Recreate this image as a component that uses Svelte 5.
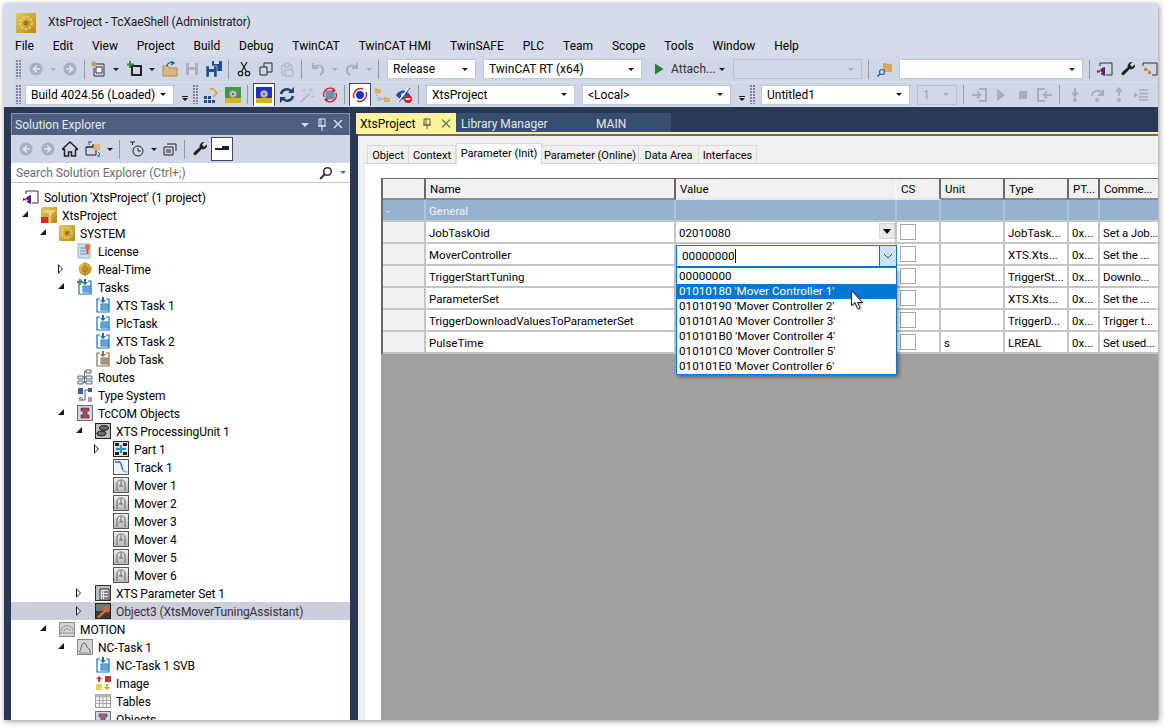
<script>
  const tb1 = [
    'grip', 2, 'd:back', 'dd-off', 'd:fwd', 'sep', 'new', 'dd', 2, 'add', 'dd', 1, 'open', 'd:save', 'saveall', 'sep', 1,
    'cut', 'copy', -1, 'd:paste', 'sep', 2, 'd:undo', 'dd-off', 'd:redo', 'dd-off', 'sep', 5,
    { c: 'Release', w: 89 }, 7, { c: 'TwinCAT RT (x64)', w: 159 }, 6, 'play',
    { t: 'Attach...', w: 46 }, 'dd', 5, { c: '', w: 129, off: true }, 3, 'sep', 2, 'find', 3,
    { c: '', w: 184 }, 3, 'sep', 1, 'sol', 1, 'wrench', 'sol2'
  ]
  const tb2 = [
    'grip', 2, { c: 'Build 4024.56 (Loaded)', w: 149 }, 5, 'over', 'grip', 'bars', 'chip', 'sep', 2, 'on:chipblue', 1, 'sync', -2, 'wand', 1, 'redc', 'sep', 1,
    'on:scan', 'nodes', 'noeye', 'sep', 4,
    { c: 'XtsProject', w: 149 }, 7, { c: '<Local>', w: 149 }, 5, 'over', 'grip', 4,
    { c: 'Untitled1', w: 149 }, 7, { c: '1', w: 40, off: true }, 3, 'sep', 1,
    'd:enter', 'd:run', 'd:stop', 'd:exit', 'sep', 1, 'd:stepin', 'd:stepover', 'd:stepout', 'd:next'
  ]
  const tbSe = [
    4, 'd:back', 'd:fwd', 'home', 1, 'syncview', 'dd', 'sep', 3, 'history', 'dd', -1, 'pages', 'sep', 1, 'wrench', 'on:bar'
  ]

  const tree = [
    [0, '', 'sol', "Solution 'XtsProject' (1 project)"],
    [1, 'o', 'proj', 'XtsProject'],
    [2, 'o', 'system', 'SYSTEM'],
    [3, '', 'license', 'License'],
    [3, 'c', 'rt', 'Real-Time'],
    [3, 'o', 'tasks', 'Tasks'],
    [4, '', 'task', 'XTS Task 1'],
    [4, '', 'task', 'PlcTask'],
    [4, '', 'task', 'XTS Task 2'],
    [4, '', 'jobtask', 'Job Task'],
    [3, '', 'routes', 'Routes'],
    [3, '', 'types', 'Type System'],
    [3, 'o', 'tcom', 'TcCOM Objects'],
    [4, 'o', 'pu', 'XTS ProcessingUnit 1'],
    [5, 'c', 'part', 'Part 1'],
    [5, '', 'track', 'Track 1'],
    [5, '', 'mover', 'Mover 1'],
    [5, '', 'mover', 'Mover 2'],
    [5, '', 'mover', 'Mover 3'],
    [5, '', 'mover', 'Mover 4'],
    [5, '', 'mover', 'Mover 5'],
    [5, '', 'mover', 'Mover 6'],
    [4, 'c', 'params', 'XTS Parameter Set 1'],
    [4, 'c', 'tuning', 'Object3 (XtsMoverTuningAssistant)', true],
    [2, 'o', 'motion', 'MOTION'],
    [3, 'o', 'nctask', 'NC-Task 1'],
    [4, '', 'task', 'NC-Task 1 SVB'],
    [4, '', 'image', 'Image'],
    [4, '', 'tables', 'Tables'],
    [4, '', 'objects', 'Objects']
  ]

  const docTabs = [
    ['Object', 42], ['Context', 47], ['Parameter (Init)', 86], ['Parameter (Online)', 97], ['Data Area', 60], ['Interfaces', 58]
  ]
  const heads = ['', 'Name', 'Value', 'CS', 'Unit', 'Type', 'PT...', 'Comme...']
  const rows = [
    ['JobTaskOid', '02010080', '', 'JobTask...', '0x...', 'Set a Job...'],
    ['MoverController', '', '', 'XTS.Xts...', '0x...', 'Set the ...'],
    ['TriggerStartTuning', '', '', 'TriggerSt...', '0x...', 'Downlo...'],
    ['ParameterSet', '', '', 'XTS.Xts...', '0x...', 'Set the ...'],
    ['TriggerDownloadValuesToParameterSet', '', '', 'TriggerD...', '0x...', 'Trigger t...'],
    ['PulseTime', '', 's', 'LREAL', '0x...', 'Set used...']
  ]
  const options = [
    '00000000',
    "01010180 'Mover Controller 1'",
    "01010190 'Mover Controller 2'",
    "010101A0 'Mover Controller 3'",
    "010101B0 'Mover Controller 4'",
    "010101C0 'Mover Controller 5'",
    "010101E0 'Mover Controller 6'"
  ]
</script>

{#snippet ic(n)}
  <svg class="i" viewBox="0 0 16 16" width="16" height="16">
    {#if n === 'back' || n === 'fwd'}
      <circle cx="8" cy="8" r="6.5" fill="#a9b0bd" />
      <path d={n === 'back' ? 'M9 4.5 5.5 8 9 11.5M6 8h6' : 'M7 4.5 10.5 8 7 11.5M10 8H4'} fill="none" stroke="#e4e7ef" stroke-width="1.6" />
    {:else if n === 'new'}
      <path d="M5 3h8v12H3V7" fill="none" stroke="#333" />
      <path d="M5 6h6v6H5z" fill="#fff" stroke="#333" />
      <path d="M3 0v6M0 3h6M1 1l4 4M5 1 1 5" stroke="#c98a2c" />
    {:else if n === 'add'}
      <path d="M5 5h9v9H5z" fill="none" stroke="#222" stroke-width="2" />
      <path d="M3 0v7M0 3.500h7" stroke="#2f8f3a" stroke-width="2" />
    {:else if n === 'open'}
      <path d="M1 5h5l1 2h8v8H1z" fill="#dcb67a" stroke="#b88a45" />
      <path d="M5 5c0-3 3-4 6-3M9 0l3 2-3 2" fill="none" stroke="#1d5fa8" stroke-width="1.300" />
    {:else if n === 'save'}
      <path d="M2 2h12v12H2z" fill="#a9b0bd" /><path d="M5 2h6v4H5zM5 9h6v5H5z" fill="#d6dbe9" />
    {:else if n === 'saveall'}
      <path d="M6 0h10v10H6z" fill="#1c4f8f" /><path d="M8 0h5v3H8z" fill="#d6dbe9" />
      <path d="M0 5h11v11H0z" fill="#1c4f8f" stroke="#cfd6e5" stroke-width=".6" /><path d="M3 5h5v3H3zM3 11h5v5H3z" fill="#d6dbe9" />
    {:else if n === 'cut'}
      <circle cx="4.500" cy="12.500" r="2.200" fill="none" stroke="#222" stroke-width="1.300" />
      <circle cx="11.500" cy="12.500" r="2.200" fill="none" stroke="#222" stroke-width="1.300" />
      <path d="M5.500 10.500 11 1M10.500 10.500 5 1" stroke="#222" stroke-width="1.300" />
    {:else if n === 'copy'}
      <path d="M6 2h8v9H6z" fill="none" stroke="#222" /><path d="M2 6h7v8H2z" fill="#cfd6e5" stroke="#222" />
    {:else if n === 'paste'}
      <path d="M3 4h10v10H3z" fill="none" stroke="#a9b0bd" /><path d="M6 2h4v4H6z" fill="#cfd6e5" stroke="#a9b0bd" />
      <path d="M6 9h8v6H6z" fill="#cfd6e5" stroke="#a9b0bd" />
    {:else if n === 'undo' || n === 'redo'}
      <path d={n === 'undo' ? 'M3 2v5h5M3 7c3-4 10-3 10 2 0 2-1 4-3 5' : 'M13 2v5H8M13 7C10 3 3 4 3 9c0 2 1 4 3 5'} fill="none" stroke="#a9b0bd" stroke-width="2" />
    {:else if n === 'play'}
      <path d="M4 2.500 12.500 8 4 13.500z" fill="#2d7d3a" />
    {:else if n === 'find'}
      <path d="M6 2h3l1 1h5v8H6z" fill="#dba45c" />
      <circle cx="5" cy="11" r="2.500" fill="#cfd6e5" stroke="#1d5fa8" stroke-width="1.200" /><path d="M3 13 .5 15.500" stroke="#1d5fa8" stroke-width="1.500" />
    {:else if n === 'sol'}
      <path d="M3 5V2h12v12H9" fill="none" stroke="#333" />
      <path d="M0 9l2 1 3-3 3-1v9l-3-1-3-3-2 1z" fill="#68217a" /><path d="M3 10l2 1.500L3 13z" fill="#fff" />
    {:else if n === 'sol2'}
      <path d="M1 5V2h14v12H10" fill="none" stroke="#333" /><path d="M2 7h3v3H2zM6 10h3v3H6z" fill="#c98a2c" /><path d="M5 8l3 3" stroke="#c98a2c" />
    {:else if n === 'wrench'}
      <path d="M15 4.500c0 3-3 4.500-5.200 3.600L4 14c-1 1-3.500-1-2.300-2.200L7.800 6C7 3.500 9.500.5 12.500 1L10 3.500 12 6l2.600-2.600c.2.300.4.700.4 1.100z" fill="#222" />
    {:else if n === 'bars'}
      <path d="M1 9h3v3H1zM5 9h3v3H5zM1 13h3v3H1zM5 13h3v3H5zM9 13h3v3H9z" fill="#1c4f8f" />
      <path d="M7 2h3l4 4-4 4" fill="none" stroke="#d9a01c" stroke-width="1.600" />
    {:else if n === 'chip' || n === 'chipblue'}
      <rect x="0" y="0" width="16" height="16" fill={n === 'chip' ? '#3d9a45' : '#1a2fd0'} />
      <rect x="0" y="11" width="16" height="5" fill="#d8b21a" />
      <circle cx="8" cy="7" r="3.500" fill="#c9c9c9" stroke="#888" stroke-width="1.600" stroke-dasharray="1.500 1" /><circle cx="8" cy="7" r="1.200" fill="#666" />
    {:else if n === 'sync'}
      <path d="M2 7c1-5 7-6 10-3M14 9c-1 5-7 6-10 3" fill="none" stroke="#1c3f6f" stroke-width="2.400" />
      <path d="M9 6h6V0zM7 10H1v6z" fill="#1c3f6f" />
    {:else if n === 'wand'}
      <path d="M1 15 10 6l1 1-9 9z" fill="#aab2bf" /><path d="M12 1v4M10 3h4M5 2v3M3.500 3.500h3M14 8v3M12.500 9.500h3" stroke="#b7bcc6" />
    {:else if n === 'redc'}
      <rect x="4" y="4" width="8" height="8" fill="#6b8fb8" stroke="#888" />
      <path d="M2 10A6.500 6.500 0 0 1 13 3.500M14 6A6.500 6.500 0 0 1 3 12.500" fill="none" stroke="#d3242a" stroke-width="1.500" /><path d="M11 1l3 3-4 1zM5 15l-3-3 4-1z" fill="#d3242a" />
    {:else if n === 'scan'}
      <circle cx="8" cy="8" r="4" fill="#1236c8" />
      <path d="M2 11A7 7 0 0 1 11 2M14 5A7 7 0 0 1 5 14" fill="none" stroke="#c32f2f" stroke-width="1.500" />
    {:else if n === 'nodes'}
      <path d="M1 1h2l1 1h3v4H1zM10 10h2l1 1h3v4h-6z" fill="#dcb051" /><circle cx="5" cy="12" r="2.200" fill="#b9bdc6" /><path d="M3 6v4M7 12h3" fill="none" stroke="#888" stroke-dasharray="1 1" />
    {:else if n === 'noeye'}
      <path d="M0 8c4-6 10-6 14 0-4 6-10 6-14 0z" fill="#1c4fc4" /><circle cx="7" cy="8" r="2" fill="#fff" /><path d="M2 15 13 1" stroke="#fff" stroke-width="2" /><path d="M3 15 14 1" stroke="#1c3f9f" />
      <circle cx="12" cy="12" r="4" fill="#d71920" /><path d="M9.500 12h5" stroke="#fff" stroke-width="1.600" />
    {:else if n === 'enter' || n === 'exit'}
      <path d={n === 'enter' ? 'M8 2h7v12H8M1 8h8M6 4.500 9.500 8 6 11.500' : 'M8 2H1v12h7M15 8H7M10 4.500 6.500 8 10 11.500'} fill="none" stroke="#a9b0bd" stroke-width="2" />
    {:else if n === 'run'}
      <path d="M4 1.500 12 8l-8 6.500z" fill="#a9b0bd" />
    {:else if n === 'stop'}
      <path d="M4 4h8v8H4z" fill="#a9b0bd" />
    {:else if n === 'stepin' || n === 'stepout'}
      <circle cx="8" cy="13" r="2" fill="#a9b0bd" />
      <path d={n === 'stepin' ? 'M8 1v7M5 5.500 8 9l3-3.500' : 'M8 9V2M5 5 8 1.500 11 5'} fill="none" stroke="#a9b0bd" stroke-width="2" />
    {:else if n === 'stepover'}
      <circle cx="8" cy="13" r="2" fill="#a9b0bd" /><path d="M3 9c0-6 9-7 10-2M14 3v5H9" fill="none" stroke="#a9b0bd" stroke-width="2" />
    {:else if n === 'next'}
      <path d="M1 5l4 3-4 3z" fill="#a9b0bd" /><path d="M6 3h9M6 6.500h9M6 10h9M6 13h9" stroke="#a9b0bd" stroke-width="1.300" />
    {:else if n === 'home'}
      <path d="M8 1 0 8.500h2.500V15h4v-4h3v4h4V8.500H16z" fill="none" stroke="#222" stroke-width="1.500" />
    {:else if n === 'syncview'}
      <path d="M1 6h10v8H1z" fill="none" stroke="#222" /><path d="M8 3h7v6H8z" fill="#dcb67a" /><path d="M1 6h7V3" stroke="#222" fill="none" /><path d="M4 1l3 0M12 15h3M4 0v4M13 11l2 2-2 2" stroke="#1d5fa8" fill="none" />
    {:else if n === 'history'}
      <circle cx="9" cy="10" r="5" fill="none" stroke="#222" /><path d="M9 7v3h3M1 1h5M3.500 1v3" fill="none" stroke="#222" />
    {:else if n === 'pages'}
      <path d="M5 3h9v7" fill="none" stroke="#222" /><path d="M2 6h9v8H2z" fill="none" stroke="#222" /><path d="M4 9h5M4 11h5" stroke="#222" />
    {:else if n === 'bar'}
      <path d="M1 9h14V5H8v2H1z" fill="#222" />
    {:else if n === 'proj'}
      <rect width="16" height="16" fill="url(#gold)" /><path d="M3 3h12l-5 5v8H8V6H3z" fill="#ecd27a" /><rect y="10" width="7" height="6" fill="#d5301f" />
    {:else if n === 'system'}
      <rect width="16" height="16" fill="url(#gold)" /><circle cx="8" cy="8" r="5" fill="none" stroke="#e7cf7e" stroke-width="1.500" stroke-dasharray="2 1" /><circle cx="8" cy="8" r="2" fill="#9c7510" />
    {:else if n === 'license'}
      <path d="M1 1h12v14H1z" fill="#cfe0f4" stroke="#8fb0d4" /><path d="M3 5h6M3 8h6M3 11h7" stroke="#6e8db0" />
      <circle cx="10.500" cy="4" r="2.700" fill="#e2752a" /><path d="M9.500 6h2v6l-1-1-1 1z" fill="#d8571a" />
    {:else if n === 'rt'}
      <circle cx="8" cy="8" r="6.500" fill="url(#gold)" /><circle cx="8" cy="8" r="2.500" fill="none" stroke="#9c7510" /><path d="M8 1v14" stroke="#9c7510" stroke-width=".8" />
    {:else if n === 'task' || n === 'tasks' || n === 'jobtask'}
      {@const col = n === 'jobtask' ? '#8a6a48' : '#0f6fc6'}
      <path d="M5 2H2v13h12V2h-3" fill="#fff" stroke={col} stroke-width="1.200" />
      <path d="M7 0h2v3h2L8 6 5 3h2z" fill={col} />
      <path d="M6 7h7v6H6z" fill={n === 'jobtask' ? '#c9b9a4' : '#b6d4f0'} stroke={col} />
      <path d="M7 9h5M7 11h5" stroke={col} />
      {#if n === 'tasks'}<path d="M3 0v6M0 3h6" stroke="#3d9a45" stroke-width="2" />{/if}
    {:else if n === 'routes'}
      <path d="M1 7h5v3H1zM1 12h5v3H1zM9 1h5v3H9zM9 7h6v3H9zM9 12h6v3H9z" fill="#e8ebf1" stroke="#5d6b7c" /><path d="M6 8h3M7.500 2.500V13.500M7.500 2.500H9M6 13.500h3" fill="none" stroke="#5d6b7c" />
    {:else if n === 'types'}
      <path d="M1 1h5v6H1z" fill="#3c5fa6" /><path d="M11 1h4v4h-4z" fill="#3c5fa6" /><path d="M11 10h4v5h-4z" fill="#9aa3b0" /><circle cx="3.500" cy="12" r="2.200" fill="#9aa3b0" /><path d="M11 3H8v10H5" fill="none" stroke="#555" />
    {:else if n === 'tcom' || n === 'objects'}
      <rect x=".5" y=".5" width="15" height="15" fill="#cfd6e5" stroke="#6b6f78" />
      <path d="M4 3h8v3h-2v4h2v3H4v-3h2V6H4z" fill={n === 'tcom' ? '#a14a52' : '#8d6b78'} stroke="#5d2a2f" stroke-width=".6" />
    {:else if n === 'pu'}
      <rect x=".5" y=".5" width="15" height="15" fill="#bdbdbd" stroke="#222" />
      <ellipse cx="9" cy="5" rx="4.500" ry="2.300" fill="#6b6b6b" stroke="#111" /><ellipse cx="6.500" cy="10.500" rx="4.500" ry="2.300" fill="#6b6b6b" stroke="#111" />
    {:else if n === 'part'}
      <rect x=".5" y=".5" width="15" height="15" fill="#e0e0e0" stroke="#222" />
      <path d="M2 2h4v3H2zM10 2h4v3h-4zM2 11h4v3H2zM10 11h4v3h-4z" fill="#222" /><path d="M8 4v8M3 8h10" stroke="#2a8fe0" stroke-width="2" />
    {:else if n === 'track'}
      <rect x=".5" y=".5" width="15" height="15" fill="#f2f2f2" stroke="#555" />
      <path d="M2 3h4" stroke="#7c3fc4" stroke-width="1.500" fill="none" /><path d="M6 3c3 0 2 5 4 8" stroke="#2a7fe0" stroke-width="1.500" fill="none" /><path d="M10 11c1 2 2 2 4 2" stroke="#3ed07a" stroke-width="1.500" fill="none" />
    {:else if n === 'mover'}
      <rect x=".5" y=".5" width="15" height="15" fill="url(#grey)" stroke="#555" />
      <path d="M4 14V6c0-4 8-4 8 0v8M8 4v5M6 9h4" fill="none" stroke="#666" />
    {:else if n === 'params'}
      <rect x=".5" y=".5" width="15" height="15" fill="#bdbdbd" stroke="#333" />
      <path d="M5 4h9v11H5z" fill="#e4e4e4" stroke="#333" /><path d="M7 7h1M9 7h4M7 10h1M9 10h4M7 13h1M9 13h4" stroke="#222" />
    {:else if n === 'tuning'}
      <rect x=".5" y=".5" width="15" height="15" fill="#3b3b3b" stroke="#222" /><rect x="1" y="1" width="14" height="7" fill="#777" />
      <path d="M2 14 9 7c-1-2 2-5 5-4l-2 2 1 2 2-1c.5 3-3 4-4 3l-7 6z" fill="#e9671e" />
    {:else if n === 'motion'}
      <rect x=".5" y="1.500" width="15" height="14" fill="#d4d4d4" stroke="#8a8a8a" />
      <path d="M2 10c0-7 12-7 12 0M5 10c0-3 6-3 6 0M1 12h14" fill="none" stroke="#777" stroke-dasharray="2 .8" />
    {:else if n === 'nctask'}
      <rect x=".5" y=".5" width="15" height="15" fill="#d4d4d4" stroke="#8a8a8a" />
      <path d="M2 13c2 0 2-9 5-9s2 5 4 5 1 4 3 4" fill="none" stroke="#666" /><path d="M2 14h12" stroke="#888" />
    {:else if n === 'image'}
      <path d="M10 1h6v6h-6z" fill="#c8303a" /><path d="M1 9h6v6H1z" fill="#e8d44a" /><path d="M4 1 1 4h2v3h2V4h2z" fill="#d8321e" /><path d="M12 15l3-3h-2V9h-2v3H9z" fill="#e8a020" />
    {:else if n === 'tables'}
      <rect x=".5" y="1.500" width="15" height="13" fill="#f4f4f4" stroke="#999" /><rect x=".5" y="1.500" width="15" height="3" fill="#bbb" />
      <path d="M1 7.500h14M1 10.500h14M4.500 2v12M8 2v12M11.500 2v12" stroke="#aaa" />
    {/if}
  </svg>
{/snippet}

{#snippet toolbar(items)}
  {#each items as it}
    {#if typeof it === 'number'}
      <span class="sp" style:margin-left="{it}px"></span>
    {:else if typeof it === 'object' && it.t}
      <span class="tt" style:width="{it.w}px">{it.t}</span>
    {:else if typeof it === 'object'}
      <span class="combo" class:off={it.off} style:width="{it.w}px"><span>{it.c}</span><b></b></span>
    {:else if it === 'grip'}
      <span class="grip"></span>
    {:else if it === 'sep'}
      <span class="sep"></span>
    {:else if it === 'dd' || it === 'dd-off'}
      <span class="dd" class:off={it === 'dd-off'}><b></b></span>
    {:else if it === 'over'}
      <span class="over"><i></i><b></b></span>
    {:else if it.startsWith('on:')}
      <span class="ib on">{@render ic(it.slice(3))}</span>
    {:else if it.startsWith('d:')}
      <span class="ib">{@render ic(it.slice(2))}</span>
    {:else}
      <span class="ib">{@render ic(it)}</span>
    {/if}
  {/each}
{/snippet}

<svg class="defs" width="0" height="0" aria-hidden="true">
  <defs>
    <linearGradient id="gold" x1="0" y1="0" x2="1" y2="1"><stop offset="0" stop-color="#e9c85e" /><stop offset="1" stop-color="#b58a16" /></linearGradient>
    <linearGradient id="grey" x1="0" y1="0" x2="0" y2="1"><stop offset="0" stop-color="#efefef" /><stop offset="1" stop-color="#b5b5b5" /></linearGradient>
  </defs>
</svg>

<div class="page">
  <div class="win">
    <div class="titlebar">
      <svg class="logo" viewBox="0 0 20 20" width="20" height="20">
        <rect width="20" height="20" fill="url(#gold)" />
        <circle cx="10" cy="10" r="6" fill="none" stroke="#e7cf7e" stroke-width="2" stroke-dasharray="2.500 1.500" /><circle cx="10" cy="10" r="2.500" fill="#9c7510" />
      </svg>
      <span>XtsProject - TcXaeShell (Administrator)</span>
    </div>
    <div class="menu">
      {#each ['File', 'Edit', 'View', 'Project', 'Build', 'Debug', 'TwinCAT', 'TwinCAT HMI', 'TwinSAFE', 'PLC', 'Team', 'Scope', 'Tools', 'Window', 'Help'] as m}
        <span>{m}</span>
      {/each}
    </div>
    <div class="tb tb1">{@render toolbar(tb1)}</div>
    <div class="tb tb2">{@render toolbar(tb2)}</div>

    <div class="main">
      <div class="panel">
        <div class="ptitle">
          <span>Solution Explorer</span>
          <svg viewBox="0 0 50 14" width="50" height="14">
            <path d="M6 5h8l-4 4z" fill="#d5dcea" />
            <path d="M24 1h6v7h-6zM23 8h8M27 8v5M26 1v6" fill="none" stroke="#e4e8f0" />
            <path d="M39 2l8 8M47 2l-8 8" stroke="#d5dcea" stroke-width="1.500" />
          </svg>
        </div>
        <div class="tb ptools">{@render toolbar(tbSe)}</div>
        <div class="search">
          <span>Search Solution Explorer (Ctrl+;)</span>
          <svg viewBox="0 0 14 14" width="14" height="14"><circle cx="8.500" cy="5.500" r="3.800" fill="none" stroke="#333" stroke-width="1.600" /><path d="M6 8 1 13" stroke="#333" stroke-width="2" /></svg>
          <b></b>
        </div>
        <div class="tree">
          {#each tree as [lvl, caret, icon, label, sel]}
            <div class="row" class:sel style:padding-left="{12 + 18 * lvl}px">
              {#if caret}<span class="caret {caret}"></span>{/if}
              {@render ic(icon)}
              <span class="lbl">{label}</span>
            </div>
          {/each}
        </div>
      </div>

      <div class="docs">
        <div class="tabs">
          <div class="tab active">
            <span>XtsProject</span>
            <svg viewBox="0 0 32 12" width="32" height="12">
              <path d="M5 1h6v6H5zM4 7h8M8 7v4M7 1v5" fill="none" stroke="#5c5a3a" />
              <path d="M23 1.500l8 8M31 1.500l-8 8" stroke="#77755a" stroke-width="1.400" />
            </svg>
          </div>
          <div class="tab lib">Library Manager</div>
          <div class="tab mainTab">MAIN</div>
        </div>
        <div class="body">
          <div class="subtabs">
            {#each docTabs as [t, w], i}
              <span class="st" class:cur={i === 2} style:width="{w}px">{t}</span>
            {/each}
          </div>
          <div class="sheet">
            <div class="gridwrap">
              <table>
                <colgroup>
                  {#each [43, 250, 221, 44, 64, 64, 31, 58] as w}<col style:width="{w}px" />{/each}
                </colgroup>
                <thead>
                  <tr>
                    {#each heads as h, i}<th class="h{i}">{h}</th>{/each}
                  </tr>
                </thead>
                <tbody>
                  <tr class="group">
                    <td>-</td><td>General</td><td></td><td></td><td></td><td></td><td></td><td></td>
                  </tr>
                  {#each rows as r, i}
                    <tr>
                      <td class="rh"></td>
                      <td>{r[0]}</td>
                      <td class="val">
                        {r[1]}
                        {#if i === 0}<span class="dropbtn"></span>{/if}
                      </td>
                      <td><span class="check"></span></td>
                      <td>{r[2]}</td>
                      <td>{r[3]}</td>
                      <td>{r[4]}</td>
                      <td>{r[5]}</td>
                    </tr>
                  {/each}
                </tbody>
              </table>

              <div class="editor">
                <span class="edit">00000000<i></i></span>
                <span class="chev"><svg viewBox="0 0 10 6" width="10" height="6"><path d="M1 1l4 4 4-4" fill="none" stroke="#444" /></svg></span>
              </div>
              <div class="list">
                {#each options as o, i}
                  <div class="opt" class:hot={i === 1}>{o}</div>
                {/each}
              </div>
              <svg class="cursor" viewBox="0 0 13 20" width="13" height="20">
                <path d="M.5.500v15l3.500-3 2.500 6 1.500.5 1-1-2.500-5.500h5z" fill="#fff" stroke="#222" />
              </svg>
            </div>
          </div>
        </div>
      </div>
    </div>
  </div>
</div>

<style>
  :global(body) {
    margin: 0;
    background: #fff;
    overflow: hidden;
  }
  .defs {
    position: absolute;
  }
  .page {
    box-sizing: border-box;
    width: 1165px;
    height: 728px;
    padding: 4px 7px 8px 4px;
    font-family: Roboto, "Noto Sans", sans-serif;
    font-size: 12px;
    color: #000;
  }
  .win {
    height: 100%;
    display: flex;
    flex-direction: column;
    overflow: hidden;
    background: #d6dbe9;
    box-shadow: 1px 1px 6px rgba(0, 0, 0, 0.45);
  }
  .titlebar {
    flex: none;
    height: 30px;
    display: flex;
    align-items: center;
    gap: 12px;
    padding-left: 12px;
    padding-top: 6px;
    box-sizing: border-box;
    color: #1b1b1b;
    letter-spacing: -0.13px;
  }
  .logo {
    margin-top: 1px;
  }
  .menu {
    flex: none;
    height: 23px;
    display: flex;
    align-items: center;
    gap: 18.9px;
    padding-left: 11px;
  }
  .tb {
    display: flex;
    align-items: center;
    overflow: hidden;
    flex: none;
  }
  .tb1 {
    height: 24px;
    margin-left: 10px;
    background: #cfd6e5;
  }
  .tb2 {
    height: 23px;
    margin: 2px 0 1px 10px;
    background: #cfd6e5;
  }
  .sp {
    flex: none;
    width: 0;
  }
  .ib {
    flex: none;
    width: 22px;
    height: 22px;
    box-sizing: border-box;
    display: flex;
    align-items: center;
    justify-content: center;
  }
  .ib.on {
    height: 24px;
    background: #fff;
    border: 1px solid #3f4a5e;
  }
  .i {
    flex: none;
    display: block;
  }
  .grip {
    flex: none;
    width: 9px;
    height: 19px;
    background-image: radial-gradient(circle at 1px 1px, #7d8798 0.8px, transparent 1px);
    background-size: 3px 3px;
    background-position: 2px 0;
    background-repeat: repeat;
    clip-path: inset(0 2px 0 2px);
  }
  .sep {
    flex: none;
    width: 1px;
    height: 19px;
    margin: 0 3px;
    background: #8f99ab;
  }
  .dd {
    flex: none;
    width: 12px;
    display: flex;
    justify-content: center;
  }
  .dd b,
  .combo b,
  .over b,
  .search b {
    width: 0;
    height: 0;
    border: 3px solid transparent;
    border-top: 3px solid #1b1b1b;
    border-bottom: 0;
    display: block;
  }
  .dd.off b {
    border-top-color: #a9b0bd;
  }
  .over {
    flex: none;
    width: 12px;
    display: flex;
    flex-direction: column;
    align-items: center;
    gap: 1px;
    margin-top: 8px;
  }
  .over i {
    width: 6px;
    height: 1px;
    background: #1b1b1b;
  }
  .tt {
    flex: none;
    box-sizing: border-box;
    padding-left: 1px;
    color: #333;
  }
  .combo {
    flex: none;
    box-sizing: border-box;
    height: 20px;
    display: flex;
    align-items: center;
    justify-content: space-between;
    padding: 0 7px 0 5px;
    background: #fff;
    border: 1px solid #c0c9da;
    white-space: nowrap;
  }
  .combo.off {
    background: #d0d7e6;
    color: #98a0ae;
    border-color: #b9c1d0;
  }
  .combo.off b {
    border-top-color: #a9b0bd;
  }

  .main {
    flex: 1;
    min-height: 0;
    display: flex;
    gap: 6px;
    padding: 6px 0 0 7px;
    background: #293955;
  }
  .panel {
    flex: none;
    width: 339px;
    display: flex;
    flex-direction: column;
    background: #fff;
    overflow: hidden;
  }
  .ptitle {
    flex: none;
    height: 22px;
    box-sizing: border-box;
    display: flex;
    align-items: center;
    justify-content: space-between;
    padding: 0 4px 0 3px;
    background: #4d6082;
    border: 1px solid #8797b2;
    border-bottom: 0;
    color: #e6eaf2;
  }
  .ptools {
    height: 28px;
    background: #cfd6e5;
  }
  .search {
    flex: none;
    height: 20px;
    box-sizing: border-box;
    display: flex;
    align-items: center;
    gap: 7px;
    padding: 0 4px 0 5px;
    background: #fff;
    border-bottom: 1px solid #c0c9da;
    color: #6d6d6d;
  }
  .search span {
    flex: 1;
  }
  .search b {
    border-top-color: #666;
  }
  .tree {
    flex: 1;
    padding-top: 5px;
    overflow: hidden;
  }
  .row {
    height: 18px;
    display: flex;
    align-items: center;
    gap: 5px;
    white-space: nowrap;
    letter-spacing: -0.08px;
  }
  .row.sel {
    background: #cccedb;
    color: #333;
  }
  .lbl {
    padding-top: 1px;
  }
  .caret {
    flex: none;
    width: 16px;
    height: 10px;
    margin: 0 3px 0 -24px;
    position: relative;
  }
  .caret.o::before {
    content: "";
    position: absolute;
    right: 5px;
    top: 1px;
    border-style: solid;
    border-width: 0 0 6px 6px;
    border-color: transparent transparent #1b1b1b transparent;
  }
  .caret.c::before {
    content: "";
    position: absolute;
    left: 5px;
    top: 0;
    border-style: solid;
    border-width: 5px 0 5px 5px;
    border-color: transparent transparent transparent #1b1b1b;
  }
  .caret.c::after {
    content: "";
    position: absolute;
    left: 6px;
    top: 2px;
    border-style: solid;
    border-width: 3px 0 3px 3px;
    border-color: transparent transparent transparent #fff;
  }

  .docs {
    flex: 1;
    min-width: 0;
    display: flex;
    flex-direction: column;
  }
  .tabs {
    flex: none;
    height: 19px;
    display: flex;
    background: #293955;
    border-bottom: 2px solid #fff29d;
  }
  .tab {
    display: flex;
    align-items: center;
    padding: 3px 0 0 5px;
    box-sizing: border-box;
    color: #e3e7ef;
    background: #364e6f;
  }
  .tab.active {
    width: 100px;
    padding: 3px 5px 0 4px;
    justify-content: space-between;
    background: #fff29d;
    color: #000;
  }
  .tab.lib {
    width: 135px;
  }
  .tab.mainTab {
    width: 80px;
  }
  .body {
    flex: 1;
    min-height: 0;
    margin-left: 2px;
    display: flex;
    flex-direction: column;
    background: #f0f0f0;
    border-top: 2px solid #6d6d6d;
  }
  .subtabs {
    flex: none;
    height: 27px;
    box-sizing: border-box;
    display: flex;
    align-items: flex-end;
    padding-left: 9px;
    font-size: 11px;
  }
  .st {
    flex: none;
    height: 18px;
    box-sizing: border-box;
    display: flex;
    align-items: center;
    justify-content: center;
    padding-top: 1px;
    background: #f0f0f0;
    border: 1px solid #d9d9d9;
    border-bottom: 0;
    border-left: 0;
    white-space: nowrap;
  }
  .st:first-child {
    border-left: 1px solid #d9d9d9;
  }
  .st.cur {
    height: 21px;
    padding: 1px 0 2px;
    background: #fff;
    margin-bottom: -1px;
    border-left: 1px solid #d9d9d9;
    position: relative;
  }
  .sheet {
    flex: 1;
    min-height: 0;
    margin-left: 7px;
    padding: 14px 0 0 16px;
    background: #fff;
    border-top: 1px solid #d9d9d9;
  }
  .gridwrap {
    position: relative;
    height: 100%;
    background: #a0a0a0;
  }
  table {
    width: 777px;
    table-layout: fixed;
    border-collapse: separate;
    border-spacing: 0;
    background: #fff;
    border-top: 1px solid #696969;
    border-left: 2px solid #696969;
    font-size: 11.5px;
  }
  th,
  td {
    height: 22px;
    box-sizing: border-box;
    padding: 1px 0 0 3px;
    font-weight: 400;
    text-align: left;
    white-space: nowrap;
    overflow: hidden;
    border-right: 2px solid #c4c4c4;
    border-bottom: 2px solid #c4c4c4;
  }
  th {
    height: 21px;
    padding: 0 0 0 4px;
    background: #f0f0f0;
    border-right-color: #696969;
    border-bottom-color: #8a8a8a;
  }
  th.h2,
  th.h7 {
    border-right-color: #f8f8f8;
  }
  th.h2,
  th.h3 {
    border-bottom-color: #e8e8e8;
  }
  .group td {
    background: #97b2d0;
    color: #eef2f7;
    border-right-color: #aec3da;
    border-bottom-color: #c4c4c4;
  }
  .rh {
    background: #f0f0f0;
  }
  td:last-child,
  th:last-child {
    border-right: 0;
    letter-spacing: -0.15px;
  }
  .val {
    position: relative;
  }
  .dropbtn {
    position: absolute;
    right: 0;
    top: 1px;
    width: 16px;
    height: 16px;
    background: #e9e9e9;
    border: 1px solid #d6d6d6;
    box-sizing: border-box;
  }
  .dropbtn::after {
    content: "";
    position: absolute;
    left: 3px;
    top: 5px;
    border: 4px solid transparent;
    border-top: 5px solid #000;
    border-bottom: 0;
  }
  .check {
    display: block;
    width: 16px;
    height: 16px;
    margin-top: -1px;
    box-sizing: border-box;
    background: #fff;
    border: 1px solid #a8a8a8;
  }
  .editor {
    position: absolute;
    left: 295px;
    top: 67px;
    width: 221px;
    height: 23px;
    box-sizing: border-box;
    display: flex;
    align-items: center;
    background: #fff;
    border: 1px solid #0078d7;
    border-bottom-width: 2px;
    font-size: 11.7px;
  }
  .edit {
    flex: 1;
    padding-left: 5px;
    display: flex;
    align-items: center;
  }
  .edit i {
    width: 1px;
    height: 14px;
    background: #000;
  }
  .chev {
    width: 16px;
    height: 100%;
    display: flex;
    align-items: center;
    justify-content: center;
    background: #cce4f7;
    border-left: 1px solid #0078d7;
  }
  .list {
    position: absolute;
    left: 295px;
    top: 90px;
    width: 221px;
    box-sizing: border-box;
    padding-top: 1px;
    background: #fff;
    border: 1px solid #0078d7;
    border-top: 0;
    box-shadow: 2px 2px 4px rgba(0, 0, 0, 0.4);
    font-size: 11.7px;
  }
  .opt {
    height: 15px;
    line-height: 15px;
    padding-left: 2px;
  }
  .opt.hot {
    background: #0078d7;
    color: #fff;
  }
  .cursor {
    position: absolute;
    left: 470px;
    top: 112px;
    filter: drop-shadow(1px 1px 1px rgba(0, 0, 0, 0.35));
  }
</style>
